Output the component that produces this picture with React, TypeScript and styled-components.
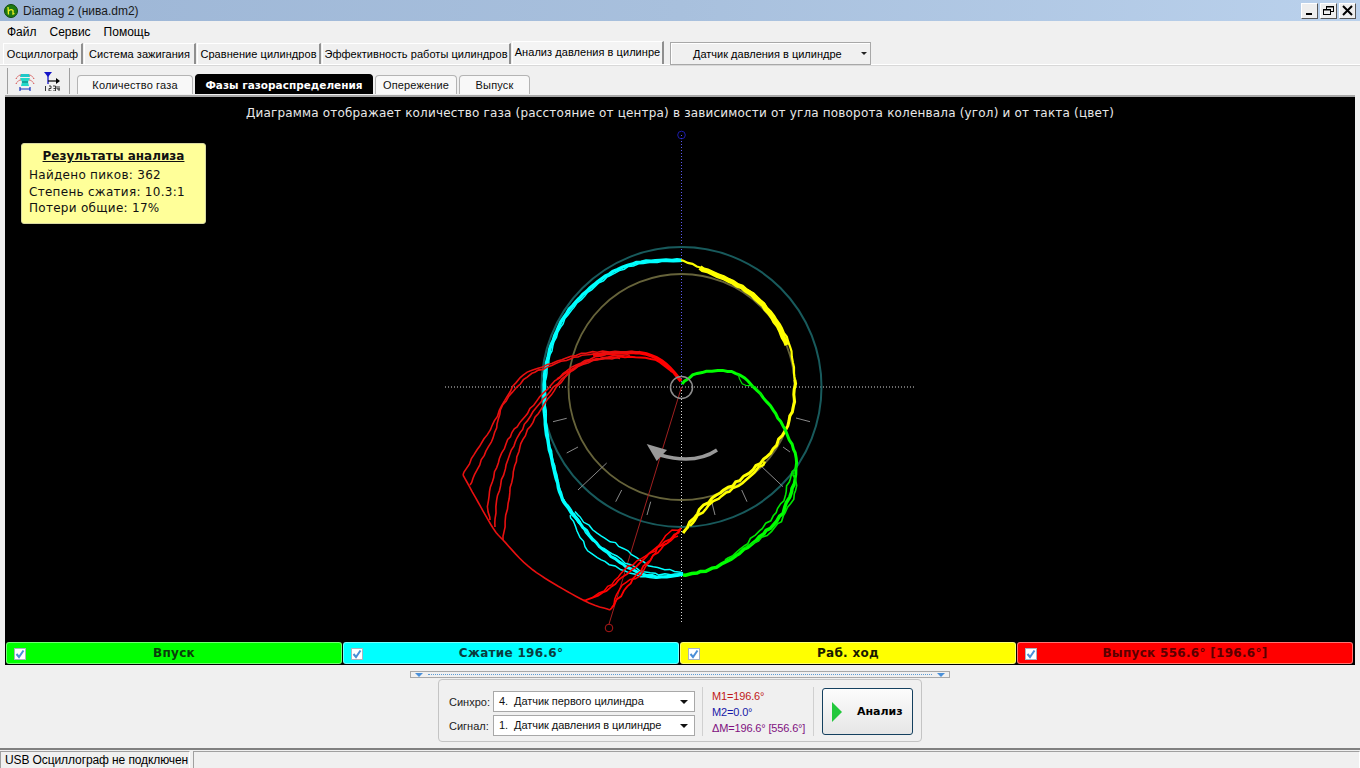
import React from "react";
import styled, { createGlobalStyle } from "styled-components";

const GlobalStyle = createGlobalStyle`
  html, body { margin: 0; padding: 0; background: #f0f0f0; }
  body { font-family: "Liberation Sans", Arial, sans-serif; font-size: 12px; color: #000; }
`;

const Win = styled.div`
  width: 1360px;
  height: 768px;
  display: flex;
  flex-direction: column;
  overflow: hidden;
  background: #f0f0f0;
`;

const TitleBar = styled.div`
  height: 21px;
  flex: none;
  display: flex;
  align-items: center;
  padding: 0 3px 0 4px;
  gap: 5px;
  background: linear-gradient(90deg, #9db6d6 0%, #a8c0dd 50%, #bad1ec 100%);
  font: 12px "Liberation Sans", sans-serif;
  color: #1a1a1a;
`;

const WinTitle = styled.span`
  flex: 1;
`;

const WinButtons = styled.div`
  display: flex;
  gap: 2px;
  margin-right: 1px;
`;

const WinButton = styled.div`
  width: 17px;
  height: 16px;
  display: flex;
  align-items: center;
  justify-content: center;
  background: #eeeeee;
  border-top: 1px solid #fff;
  border-left: 1px solid #fff;
  border-right: 1px solid #555;
  border-bottom: 1px solid #555;
  box-sizing: border-box;
`;

const MenuBar = styled.div`
  height: 21px;
  flex: none;
  display: flex;
  align-items: center;
  padding-left: 7px;
  gap: 13px;
  font-size: 12px;
`;

const MainTabs = styled.div`
  height: 23px;
  flex: none;
  display: flex;
  align-items: flex-end;
  padding-left: 3px;
  box-sizing: border-box;
  border-bottom: 1px solid #fff;
  box-shadow: 0 1px 0 #d8d8d8;
`;

const MainTab = styled.div<{ $w: number; $active?: boolean }>`
  width: ${(p) => p.$w}px;
  flex: none;
  box-sizing: border-box;
  height: ${(p) => (p.$active ? 23 : 21)}px;
  padding-bottom: ${(p) => (p.$active ? 3 : 0)}px;
  display: flex;
  align-items: center;
  justify-content: center;
  font-size: 11px;
  letter-spacing: 0.05px;
  white-space: nowrap;
  border-top: 1px solid #fff;
  border-left: 1px solid #fff;
  border-right: 2px solid #8f8f8f;
  margin-right: ${(p) => (p.$active ? 6 : 1)}px;
  background: ${(p) => (p.$active ? "#f4f4f4" : "#f0f0f0")};
`;

const Combo = styled.div`
  width: 201px;
  height: 23px;
  flex: none;
  box-sizing: border-box;
  margin-bottom: -1px;
  display: flex;
  align-items: center;
  border: 1px solid #a8a8a8;
  background: #f0f0f0;
  box-shadow: inset 1px 1px 0 #fff;
  padding-left: 22px;
  font-size: 11px;
`;

const ComboText = styled.span`
  flex: 1;
`;

const Caret = styled.span`
  width: 0;
  height: 0;
  margin-right: 3px;
  border-left: 3px solid transparent;
  border-right: 3px solid transparent;
  border-top: 3px solid #222;
`;

const SubRow = styled.div`
  height: 30px;
  flex: none;
  display: flex;
  align-items: flex-end;
  padding-left: 7px;
`;

const Toolbar = styled.div`
  width: 63px;
  height: 26px;
  flex: none;
  box-sizing: border-box;
  margin-bottom: 1px;
  display: flex;
  align-items: center;
  gap: 8px;
  padding-left: 7px;
  border-left: 1px solid #a0a0a0;
  border-right: 1px solid #a0a0a0;
  margin-right: 7px;
`;

const SubTab = styled.div<{ $w: number; $active?: boolean }>`
  width: ${(p) => p.$w}px;
  height: ${(p) => (p.$active ? 20 : 19)}px;
  flex: none;
  box-sizing: border-box;
  margin-right: 2px;
  margin-bottom: 1px;
  display: flex;
  align-items: center;
  justify-content: center;
  border: 1px solid ${(p) => (p.$active ? "#000" : "#b4b4b4")};
  border-bottom: none;
  border-radius: 4px 4px 0 0;
  background: ${(p) => (p.$active ? "#000" : "#f8f8f8")};
  color: ${(p) => (p.$active ? "#fff" : "#111")};
  font: ${(p) =>
    p.$active ? 'bold 10.5px "DejaVu Sans", sans-serif' : '11px "Liberation Sans", sans-serif'};
  letter-spacing: ${(p) => (p.$active ? 0 : 0.15)}px;
`;

const Scope = styled.div`
  height: 570px;
  flex: none;
  margin: 0 5px;
  box-sizing: border-box;
  background: #000;
  border-top: 2px solid #a8a8a8;
  display: flex;
  flex-direction: column;
`;

const Plot = styled.div`
  position: relative;
  flex: 1;
`;

const PlotSvg = styled.svg`
  position: absolute;
  inset: 0;
  display: block;
`;

const PlotCaption = styled.div`
  position: relative;
  padding-top: 9px;
  text-align: center;
  color: #e8e8e8;
  font: 12px "DejaVu Sans", sans-serif;
  letter-spacing: 0.18px;
`;

const Note = styled.div`
  position: absolute;
  left: 16px;
  top: 46px;
  width: 185px;
  height: 81px;
  box-sizing: border-box;
  padding: 5px 7px;
  background: #ffff99;
  border: 1px solid #d8d8a0;
  border-radius: 3px;
  color: #111;
  font: 12px/16.5px "DejaVu Sans", sans-serif;
  letter-spacing: 0.28px;
`;

const NoteTitle = styled.div`
  font-weight: bold;
  font-size: 12px;
  letter-spacing: 0;
  text-decoration: underline;
  text-align: center;
  line-height: 15px;
  margin-bottom: 3px;
`;

const PhaseRow = styled.div`
  height: 24px;
  flex: none;
  display: flex;
  gap: 1px;
  padding: 1px 2px 1px 1px;
  box-sizing: border-box;
`;

const Phase = styled.div<{ $bg: string; $fg: string }>`
  flex: 1;
  position: relative;
  display: flex;
  align-items: center;
  justify-content: center;
  box-sizing: border-box;
  background: ${(p) => p.$bg};
  color: ${(p) => p.$fg};
  border: 1px solid rgba(255, 255, 255, 0.45);
  border-radius: 3px;
  font: bold 12px "DejaVu Sans", sans-serif;
  letter-spacing: 0.3px;
`;

const Check = styled.span`
  position: absolute;
  left: 7px;
  top: 5px;
  width: 12px;
  height: 12px;
  box-sizing: border-box;
  background: #fff;
  border: 1px solid #a8b4c0;
  display: flex;
  align-items: center;
  justify-content: center;
`;

const Controls = styled.div`
  height: 83px;
  flex: none;
  position: relative;
  display: flex;
  flex-direction: column;
  align-items: center;
`;

const Splitter = styled.div`
  width: 540px;
  height: 7px;
  margin-top: 6px;
  flex: none;
  box-sizing: border-box;
  border: 1px solid #a8a8a8;
  display: flex;
  align-items: center;
  justify-content: space-between;
  padding: 0 4px;
`;

const SplitDots = styled.span`
  flex: 1;
  margin: 0 5px;
  border-top: 1px dotted #5b9bd5;
`;

const SplitArrow = styled.span`
  width: 0;
  height: 0;
  border-left: 4px solid transparent;
  border-right: 4px solid transparent;
  border-top: 4px solid #4a90d9;
`;

const Group = styled.div`
  width: 484px;
  height: 63px;
  margin-top: 1px;
  flex: none;
  box-sizing: border-box;
  border: 1px solid #c4c4c4;
  border-radius: 4px;
  display: flex;
  align-items: center;
  padding-left: 10px;
`;

const Fields = styled.div`
  display: flex;
  flex-direction: column;
  gap: 3px;
  margin-top: 6px;
`;

const Field = styled.div`
  display: flex;
  align-items: center;
  height: 21px;
  font-size: 11px;
  color: #222;
`;

const FieldLabel = styled.span`
  width: 44px;
`;

const Select = styled.div`
  width: 202px;
  height: 21px;
  box-sizing: border-box;
  display: flex;
  align-items: center;
  padding: 0 6px 2px 5px;
  background: #fff;
  border: 1px solid #a8a8a8;
  font-size: 11px;
  letter-spacing: -0.05px;
  white-space: pre;
  color: #111;
`;

const SelectCaret = styled.span`
  width: 0;
  height: 0;
  margin: 2px 0 0 auto;
  border-left: 4px solid transparent;
  border-right: 4px solid transparent;
  border-top: 4px solid #111;
`;

const Readout = styled.div`
  width: 112px;
  height: 49px;
  box-sizing: border-box;
  margin: 2px 0 0 7px;
  padding: 0 0 0 9px;
  border-left: 1px solid #d0d0d0;
  border-right: 1px solid #d0d0d0;
  display: flex;
  flex-direction: column;
  justify-content: center;
  font-size: 11px;
  letter-spacing: -0.15px;
  line-height: 16px;
  white-space: nowrap;
`;

const Mark = styled.div<{ $c: string }>`
  color: ${(p) => p.$c};
`;

const RunButton = styled.div`
  width: 91px;
  height: 47px;
  margin: 2px 0 0 8px;
  box-sizing: border-box;
  display: flex;
  align-items: center;
  padding-left: 9px;
  gap: 15px;
  border: 1px solid #14405f;
  border-radius: 3px;
  background: linear-gradient(#fcfcfc, #e6e6e6);
  font: bold 11px "DejaVu Sans", sans-serif;
`;

const StatusBar = styled.div`
  flex: 1;
  display: flex;
  box-sizing: border-box;
  border-top: 2px solid #808080;
  padding-top: 1px;
  border-bottom: 1px solid #3e5670;
  gap: 3px;
`;

const StatusCell = styled.div<{ $grow?: boolean }>`
  ${(p) => (p.$grow ? "flex: 1;" : "width: 190px;")}
  box-sizing: border-box;
  border-top: 1px solid #a0a0a0;
  border-left: 1px solid #a0a0a0;
  border-right: 1px solid #fff;
  padding: 1px 0 0 4px;
  font: 12px/15px "Liberation Sans", sans-serif;
  letter-spacing: -0.1px;
  white-space: nowrap;
  overflow: hidden;
`;

type Pt = [number, number];

// catmull-rom through the knots, with a small repeatable wobble on top
function trace(knots: Pt[], amp = 0, seed = 1, step = 5): string {
  const out: string[] = [];
  for (let i = 0; i < knots.length - 1; i++) {
    const p0 = knots[Math.max(i - 1, 0)];
    const p1 = knots[i];
    const p2 = knots[i + 1];
    const p3 = knots[Math.min(i + 2, knots.length - 1)];
    const dist = Math.hypot(p2[0] - p1[0], p2[1] - p1[1]);
    const n = Math.max(1, Math.round(dist / step));
    for (let k = 0; k < n; k++) {
      const t = k / n;
      const f = (a: number, b: number, c: number, d: number) =>
        0.5 *
        (2 * b + (c - a) * t + (2 * a - 5 * b + 4 * c - d) * t * t + (3 * b - a - 3 * c + d) * t * t * t);
      const j = Math.sin((i * 7 + k) * 1.9 + seed * 3.1) * amp;
      const j2 = Math.cos((i * 5 + k) * 2.7 + seed) * amp;
      out.push(`${(f(p0[0], p1[0], p2[0], p3[0]) + j).toFixed(1)},${(f(p0[1], p1[1], p2[1], p3[1]) + j2).toFixed(1)}`);
    }
  }
  const last = knots[knots.length - 1];
  out.push(`${last[0]},${last[1]}`);
  return out.join(" ");
}

const CX = 681.5;
const CY = 387;

const cyanUpper: Pt[] = [
  [681, 260], [660, 260.5], [636.7, 262.7], [613, 271.7], [590, 288], [566.7, 313], [553, 340],
  [546, 366.7], [544, 390], [546, 430], [555, 473], [563, 500], [580, 523],
];
const cyanLower: Pt[] = [
  [563, 500], [580, 523], [600, 546.7], [626.7, 566.7], [646.7, 575], [666.7, 577], [683, 574],
];
const cyanLower2: Pt[] = [
  [575, 512], [596.7, 533], [623, 548], [640, 560], [653, 566.7], [670, 570], [683, 573],
];
const cyanLower3: Pt[] = [
  [570, 515], [588, 550], [610, 564], [630, 573], [650, 578], [670, 576], [683, 575],
];
const cyanLower4: Pt[] = [
  [572, 512], [592, 540], [616, 556], [635, 568], [655, 574], [683, 574],
];

const yellowTop: Pt[] = [
  [681, 260], [706.7, 270], [733, 281.7], [756.7, 296.7], [776.7, 320], [790, 346.7], [795, 380],
];
const yellowThick: Pt[] = [
  [700, 268], [733, 282.5], [756, 298], [775, 321], [787, 345],
];
const yellowBottom: Pt[] = [
  [795, 380], [793, 406.7], [785, 430], [770, 453], [760, 463], [740, 480], [716.7, 495], [700, 510], [683, 533],
];
const yellowBottom2: Pt[] = [
  [765, 462], [742, 483], [718, 498], [702, 512], [690, 526],
];

const greenTop: Pt[] = [
  [682, 384], [693, 375], [706.7, 371.7], [723, 370.7], [740, 375], [756.7, 390], [773, 410], [785, 430],
  [795, 453], [796.7, 463], [794, 485],
];
const greenBottom: Pt[] = [
  [794, 485], [780, 516.7], [760, 536.7], [740, 553], [716.7, 566.7], [696.7, 573], [683, 575],
];
const greenInner: Pt[] = [
  [797, 465], [790, 478], [783, 500], [770, 520], [755, 535], [740, 550], [725, 560],
];
const greenOuter: Pt[] = [
  [793, 472], [796, 490], [786, 512], [775, 528], [762, 538], [745, 548],
];
const greenLoop: Pt[] = [
  [738, 374], [742, 384], [755, 387], [762, 396],
];

const redHead: Pt[] = [
  [681, 381], [670, 368], [656.7, 358], [640, 353], [616.7, 353], [593, 355],
];
const redHead2: Pt[] = [
  [672, 372], [655, 360], [630, 357], [605, 358], [583, 363], [557, 379],
];
const redA: Pt[] = [
  [640, 352], [593, 352], [566.7, 358], [543, 366.7], [523, 375], [506.7, 396.7], [490, 430], [476.7, 450], [463, 475],
];
const redB: Pt[] = [
  [640, 352], [593, 354], [566, 360], [543, 369], [527, 377], [503, 405], [495, 433], [481.7, 460], [470, 485],
];
const redC: Pt[] = [
  [616, 352], [590, 359], [566.7, 371], [540, 397], [520, 423], [511.7, 433], [498, 463], [488, 500], [490, 520],
];
const redD: Pt[] = [
  [630, 355], [607, 357], [573, 370], [540, 403], [520, 433], [508, 460], [497, 500], [495, 527],
];
const redE: Pt[] = [
  [620, 358], [583, 363], [557, 387], [528, 430], [517, 457], [508, 503], [503, 540],
];
const redArc: Pt[] = [
  [463, 475], [478, 502], [493, 528], [503, 540], [533, 570], [583, 600], [610, 610],
];
const redTail: Pt[] = [
  [610, 610], [627, 587], [647, 563], [667, 543], [680, 530],
];
const redTail2: Pt[] = [
  [583, 601], [603, 593], [623, 577], [640, 563], [653, 550], [673, 537], [681, 528],
];
const redTail3: Pt[] = [
  [612, 608], [622, 585], [640, 575], [655, 552], [668, 533], [681, 529],
];
const redTail4: Pt[] = [
  [592, 598], [612, 584], [624, 570], [646, 556], [662, 546], [678, 536],
];

const ticks: [number, number, number, number][] = [
  [553, 421.7, 566.7, 418.3],
  [566.7, 453, 578, 447],
  [578, 490, 606.7, 463],
  [615.7, 501.7, 621.7, 490],
  [647, 515, 650.7, 501.7],
  [715, 515, 711.7, 501.7],
  [747, 501.7, 741.7, 490],
  [783, 486.7, 760, 465],
  [790, 452, 783, 447],
  [810, 421.7, 796, 418],
];

function PolarChart() {
  return (
    <PlotSvg width={1350} height={544} viewBox="5 97 1350 544">
      <g fill="none">
        <line x1={445} y1={CY} x2={916} y2={CY} stroke="#d8d8d8" strokeDasharray="1 2" />
        <line x1={CX} y1={135} x2={CX} y2={CY} stroke="#5a5af0" strokeDasharray="1 2" />
        <line x1={CX} y1={CY} x2={CX} y2={622} stroke="#d8d8d8" strokeDasharray="1 2" />
        <circle cx={CX} cy={CY} r={140} stroke="#185a5c" strokeWidth={2} />
        <circle cx={CX} cy={CY} r={113} stroke="#66633a" strokeWidth={1.8} />
        {ticks.map((t, i) => (
          <line key={i} x1={t[0]} y1={t[1]} x2={t[2]} y2={t[3]} stroke="#8a8a8a" />
        ))}
        <line x1={CX} y1={CY} x2={609} y2={624} stroke="#a02020" />
        <circle cx={609} cy={628} r={3.8} stroke="#b01818" />
        <circle cx={CX} cy={135} r={3.8} stroke="#1c1ca8" />

        <polyline points={trace(cyanUpper, 0.3, 1)} stroke="#00ffff" strokeWidth={3.4} />
        <polyline points={trace(cyanUpper.map(([x, y]) => [x + (x < CX ? 1.5 : 0), y + 1.5] as Pt), 0.5, 2)} stroke="#00ffff" strokeWidth={1.5} />
        <polyline points={trace(cyanLower, 0.5, 3)} stroke="#00ffff" strokeWidth={3} />
        <polyline points={trace(cyanLower2, 0.8, 4)} stroke="#00ffff" strokeWidth={1.5} />
        <polyline points={trace(cyanLower3, 0.8, 5)} stroke="#00ffff" strokeWidth={1.5} />
        <polyline points={trace(cyanLower4, 0.8, 6)} stroke="#00ffff" strokeWidth={1.5} />

        <polyline points={trace(yellowTop, 0.4, 1)} stroke="#ffff00" strokeWidth={2.2} />
        <polyline points={trace(yellowThick, 0.4, 3)} stroke="#ffff00" strokeWidth={5} />
        <polyline points={trace(yellowBottom, 0.8, 2)} stroke="#ffff00" strokeWidth={3} />
        <polyline points={trace(yellowBottom2, 0.8, 4)} stroke="#ffff00" strokeWidth={2.5} />

        <polyline points={trace(greenTop, 0.4, 1)} stroke="#00ff00" strokeWidth={3} />
        <polyline points={trace(greenLoop, 0.3, 2)} stroke="#00e000" strokeWidth={1.2} />
        <polyline points={trace(greenBottom, 0.8, 3)} stroke="#00ff00" strokeWidth={3.5} />
        <polyline points={trace(greenInner, 0.9, 4)} stroke="#00e600" strokeWidth={1.6} />
        <polyline points={trace(greenOuter, 0.9, 5)} stroke="#00e600" strokeWidth={1.6} />

        <polyline points={trace(redHead, 0.2, 1)} stroke="#ff0000" strokeWidth={3.5} />
        <polyline points={trace(redHead2, 0.3, 2)} stroke="#ff0000" strokeWidth={2} />
        <polyline points={trace(redA, 0.5, 3)} stroke="#e81010" strokeWidth={1.6} />
        <polyline points={trace(redB, 0.5, 4)} stroke="#e81010" strokeWidth={1.6} />
        <polyline points={trace(redC, 0.5, 5)} stroke="#e81010" strokeWidth={1.6} />
        <polyline points={trace(redD, 0.5, 6)} stroke="#e81010" strokeWidth={1.6} />
        <polyline points={trace(redE, 0.5, 7)} stroke="#e81010" strokeWidth={1.6} />
        <polyline points={trace(redArc)} stroke="#e81010" strokeWidth={1.6} />
        <polyline points={trace(redTail, 0.7, 8)} stroke="#ff0000" strokeWidth={1.8} />
        <polyline points={trace(redTail2, 0.7, 9)} stroke="#ff0000" strokeWidth={1.8} />
        <polyline points={trace(redTail3, 0.7, 10)} stroke="#ff0000" strokeWidth={1.5} />
        <polyline points={trace(redTail4, 0.7, 11)} stroke="#ff0000" strokeWidth={1.5} />
        <circle cx={CX} cy={CY + 0.5} r={11} stroke="#8c8c8c" strokeWidth={1.5} />
        <path d="M717 450 Q695 465 660 455" stroke="#999" strokeWidth={3.5} />
      </g>
      <polygon points="646.7,444 667,450 656.7,461" fill="#999" />
    </PlotSvg>
  );
}

function ChipIcon() {
  return (
    <svg width="20" height="20" viewBox="0 0 20 20" fill="none">
      <path d="M5 7 L15 7 L13 11 L14 15 L6 15 L7 11 Z" fill="#22d8c8" />
      <path d="M6 3 H14 L15 6 H5 Z" fill="#1fc8c8" />
      <path d="M1 8 Q3 4 6 4 M19 8 Q17 4 14 4" stroke="#d03030" strokeDasharray="1.5 1" />
      <path d="M1 13 Q3 9 6 9 M19 13 Q17 9 14 9" stroke="#d03030" strokeDasharray="1.5 1" />
      <path d="M5 18 H15 M5 16 V20 M15 16 V20" stroke="#1030c0" strokeWidth="1.2" />
      <path d="M7 11 H13" stroke="#0a7070" />
    </svg>
  );
}

function FlagIcon() {
  return (
    <svg width="20" height="20" viewBox="0 0 20 20" fill="none">
      <path d="M1 1 H9 L5 6 Z" fill="#1414c8" />
      <path d="M5 4 V13" stroke="#1414c8" strokeWidth="1.3" />
      <path d="M5 10 H15" stroke="#000" strokeWidth="1.2" />
      <path d="M13 7 L17 10 L13 13 Z" fill="#000" />
      <path
        d="M2.5 15 V20 M6 15 H8 V17.5 H6 V20 H8.5 M10 15 H12.5 V20 H10 M10.5 17.5 H12.5 M14 15 V18 H17 M16 15 V20"
        stroke="#222"
        strokeWidth="0.9"
      />
    </svg>
  );
}

function AppIcon() {
  return (
    <svg width="14" height="14" viewBox="0 0 14 14">
      <circle cx="7" cy="7" r="6.5" fill="#1f7a12" stroke="#0f4a08" />
      <path d="M4 3 L4.5 10.5 M4.5 7 Q7 4.5 9 6.5 L9 10 L10.5 9.5" fill="none" stroke="#f0f020" strokeWidth="1.3" />
    </svg>
  );
}

function Tick() {
  return (
    <svg width="10" height="10" viewBox="0 0 10 10" fill="none">
      <path d="M1.5 5 L4 8 L8.5 1.5" stroke="#4a8fd8" strokeWidth="2" />
    </svg>
  );
}

const mainTabs = [
  { label: "Осциллограф", w: 80 },
  { label: "Система зажигания", w: 112 },
  { label: "Сравнение цилиндров", w: 124 },
  { label: "Эффективность работы цилиндров", w: 189 },
];

const subTabs = [
  { label: "Количество газа", w: 116 },
  { label: "Фазы газораспределения", w: 178, active: true },
  { label: "Опережение", w: 82 },
  { label: "Выпуск", w: 71 },
];

const phases = [
  { label: "Впуск", bg: "#00ff00", fg: "#0b3d0b" },
  { label: "Сжатие 196.6°", bg: "#00ffff", fg: "#0a3d3d" },
  { label: "Раб. ход", bg: "#ffff00", fg: "#1a1a00" },
  { label: "Выпуск 556.6° [196.6°]", bg: "#ff0000", fg: "#5a0000" },
];

export default function App() {
  return (
    <Win>
      <GlobalStyle />
      <TitleBar>
        <AppIcon />
        <WinTitle>Diamag 2 (нива.dm2)</WinTitle>
        <WinButtons>
          <WinButton>
            <svg width="11" height="11" viewBox="0 0 11 11">
              <rect x="2" y="8" width="6" height="2" fill="#000" />
            </svg>
          </WinButton>
          <WinButton>
            <svg width="11" height="11" viewBox="0 0 11 11" fill="none" stroke="#000">
              <rect x="3.5" y="1.5" width="7" height="5" />
              <rect x="0.5" y="4.5" width="7" height="5" fill="#eee" />
              <path d="M1 5 H7 M4 2 H10" />
            </svg>
          </WinButton>
          <WinButton>
            <svg width="11" height="11" viewBox="0 0 11 11" stroke="#000" strokeWidth="2">
              <path d="M1 1 L10 10 M10 1 L1 10" />
            </svg>
          </WinButton>
        </WinButtons>
      </TitleBar>
      <MenuBar>
        <span>Файл</span>
        <span>Сервис</span>
        <span>Помощь</span>
      </MenuBar>
      <MainTabs>
        {mainTabs.map((t) => (
          <MainTab key={t.label} $w={t.w}>
            {t.label}
          </MainTab>
        ))}
        <MainTab $w={152} $active>
          Анализ давления в цилинре
        </MainTab>
        <Combo>
          <ComboText>Датчик давления в цилиндре</ComboText>
          <Caret />
        </Combo>
      </MainTabs>
      <SubRow>
        <Toolbar>
          <ChipIcon />
          <FlagIcon />
        </Toolbar>
        {subTabs.map((t) => (
          <SubTab key={t.label} $w={t.w} $active={t.active}>
            {t.label}
          </SubTab>
        ))}
      </SubRow>
      <Scope>
        <Plot>
          <PolarChart />
          <PlotCaption>
            Диаграмма отображает количество газа (расстояние от центра) в зависимости от угла поворота
            коленвала (угол) и от такта (цвет)
          </PlotCaption>
          <Note>
            <NoteTitle>Результаты анализа</NoteTitle>
            <div>Найдено пиков: 362</div>
            <div>Степень сжатия: 10.3:1</div>
            <div>Потери общие: 17%</div>
          </Note>
        </Plot>
        <PhaseRow>
          {phases.map((p) => (
            <Phase key={p.label} $bg={p.bg} $fg={p.fg}>
              <Check>
                <Tick />
              </Check>
              {p.label}
            </Phase>
          ))}
        </PhaseRow>
      </Scope>
      <Controls>
        <Splitter>
          <SplitArrow />
          <SplitDots />
          <SplitArrow />
        </Splitter>
        <Group>
          <Fields>
            <Field>
              <FieldLabel>Синхро:</FieldLabel>
              <Select>
                {"4.  Датчик первого цилиндра"}
                <SelectCaret />
              </Select>
            </Field>
            <Field>
              <FieldLabel>Сигнал:</FieldLabel>
              <Select>
                {"1.  Датчик давления в цилиндре"}
                <SelectCaret />
              </Select>
            </Field>
          </Fields>
          <Readout>
            <Mark $c="#c01818">M1=196.6°</Mark>
            <Mark $c="#1818a8">M2=0.0°</Mark>
            <Mark $c="#801080">ΔM=196.6° [556.6°]</Mark>
          </Readout>
          <RunButton>
            <svg width="10" height="20" viewBox="0 0 10 20">
              <polygon points="0,0 10,10 0,20" fill="#22c83c" />
            </svg>
            Анализ
          </RunButton>
        </Group>
      </Controls>
      <StatusBar>
        <StatusCell>USB Осциллограф не подключен</StatusCell>
        <StatusCell $grow />
      </StatusBar>
    </Win>
  );
}
